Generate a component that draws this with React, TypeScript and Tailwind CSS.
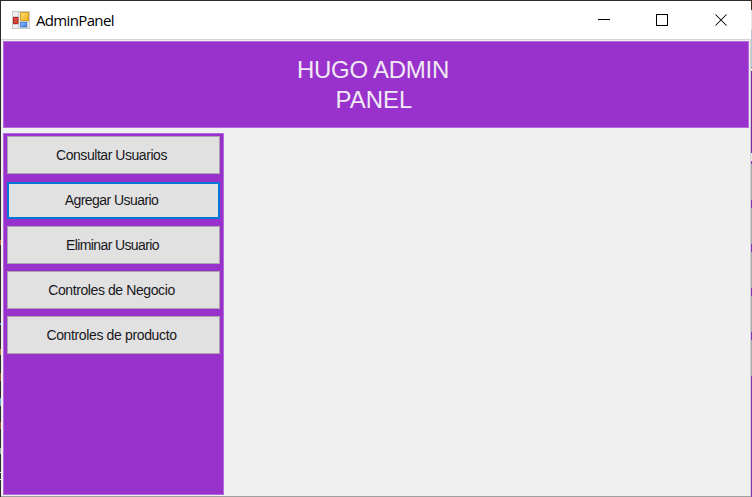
type MenuItem = { label: string; text: string; focused?: boolean };

const items: MenuItem[] = [
  { label: 'Consultar Usuarios', text: 'tracking-[-0.45px] pr-[4px]' },
  { label: 'Agregar Usuario', text: 'tracking-[-0.55px] pr-[4px]', focused: true },
  { label: 'Eliminar Usuario', text: 'tracking-[-0.62px] pr-[2px]' },
  { label: 'Controles de Negocio', text: 'tracking-[-0.4px] pr-[4px]' },
  { label: 'Controles de producto', text: 'tracking-[-0.36px] pr-[4px]' },
];

function AppIcon() {
  return (
    <svg className="size-[18px]" viewBox="0 0 18 18">
      <rect x=".5" y=".5" width="17" height="17" fill="#efefef" stroke="#c9c9c9" />
      <path d="M1 5.5H7M6.5 1V17M7 10.5H17M15.5 11V17M1 13.5H6" stroke="#cdcdcd" fill="none" />
      <defs>
        <linearGradient id="gold" x2="1" y2="1">
          <stop offset="0" stopColor="#ffe58a" />
          <stop offset="1" stopColor="#eda90c" />
        </linearGradient>
        <linearGradient id="blue" x2="1" y2="1">
          <stop offset="0" stopColor="#9cc5ff" />
          <stop offset="1" stopColor="#3474da" />
        </linearGradient>
      </defs>
      <rect x="8.5" y="1.5" width="8" height="8" fill="url(#gold)" stroke="#d99f1d" />
      <rect x="1.5" y="6.5" width="4.5" height="6" fill="#d2443d" stroke="#b52b27" />
      <rect x="8.5" y="11.5" width="6" height="4.5" fill="url(#blue)" stroke="#4b83d8" />
    </svg>
  );
}

function TitleBar() {
  return (
    <header className="flex h-[39px] shrink-0 items-center border-b border-[#d5d5d5] bg-white">
      <div className="flex w-[29px] justify-end">
        <AppIcon />
      </div>
      <h1 className="ml-[6px] pb-px font-['Open_Sans','Noto_Sans',sans-serif] text-[15px] leading-[20px] tracking-[-0.65px] text-black">
        AdminPanel
      </h1>
      <div className="ml-auto flex pr-[22px]">
        <svg width="132" height="14" viewBox="0 0 132 14" fill="none" stroke="#000" shapeRendering="crispEdges">
          <path d="M1 6.5H13" />
          <rect x="59.5" y="1.5" width="11" height="11" />
          <path d="M118.5 1.5L129.5 12.5M129.5 1.5L118.5 12.5" shapeRendering="auto" strokeWidth="1.05" />
        </svg>
      </div>
    </header>
  );
}

function MenuButton({ item }: { item: MenuItem }) {
  return (
    <button
      className={`flex w-[213px] items-center justify-center bg-[#e1e1e1] text-[14px] leading-[18px] text-[#18181c] ${
        item.focused ? 'mt-px h-[37px] border-2 border-[#0078d7] pb-px' : 'h-[38px] border border-[#aaa2b0]'
      }`}
    >
      <span className={`whitespace-nowrap ${item.text}`}>{item.label}</span>
    </button>
  );
}

/* Slivers of the windows behind, one pixel wide on either side. */
const leftEdge = [
  'mt-[240px] h-[5px] bg-[#b5683a]',
  'mt-[78px] h-[2px] bg-[#5aa0d8]',
  'mt-[24px] h-[6px] bg-[#b5803f]',
  'mt-[18px] h-[8px] bg-[#96563c]',
  'mt-[17px] h-[8px] bg-[#75a9c8]',
  'mt-[16px] h-[7px] bg-[#96563c]',
  'mt-[19px] h-[6px] bg-[#93a9a4]',
  'mt-[18px] h-px bg-[#dddddd]',
  'mt-[6px] h-px bg-[#dddddd]',
];

const rightEdge = [
  'h-[10px] bg-[#3b2a20]',
  'h-[20px] bg-[#e8e8e8]',
  'h-[37px] bg-[#bac7d3]',
  'h-px bg-[#777777]',
  'h-[3px] bg-[#e8e8e8]',
  'h-[82px] bg-[#7a28a8]',
  'h-[8px] bg-[#e8e8e8]',
  'h-[3px] bg-[#8a35b8]',
  'h-[36px] bg-[#a8a8a8]',
  'h-[8px] bg-[#8a35b8]',
  'h-[36px] bg-[#a8a8a8]',
  'h-[8px] bg-[#8a35b8]',
  'h-[36px] bg-[#a8a8a8]',
  'h-[8px] bg-[#8a35b8]',
  'h-[36px] bg-[#a8a8a8]',
  'h-[8px] bg-[#8a35b8]',
  'h-[36px] bg-[#a8a8a8]',
  'flex-1 bg-[#8a35b8]',
];

export default function App() {
  return (
    <div className="flex h-[497px] w-[752px] bg-[#30292b] font-['Liberation_Sans',Arial,sans-serif]">
      <div className="flex w-px flex-col">
        {leftEdge.map((style, i) => (
          <div key={i} className={style} />
        ))}
      </div>
      <div className="mt-px flex w-[750px] flex-col border-b border-[#a0a0a0] bg-[#f0f0f0]">
        <TitleBar />
        <main className="flex flex-1 flex-col border-r border-[#d2d2d2] pt-px pr-px pb-px pl-[2px]">
          <section className="flex h-[87px] shrink-0 justify-center border border-[#b56adb] bg-[#9932cc] pt-[12px] pr-[6px] text-center text-[24px] leading-[30px] tracking-[-0.25px] text-[#f0e9f4]">
            <h2 className="pt-px">
              HUGO ADMIN
              <br />
              <span className="pl-[2px] tracking-normal">PANEL</span>
            </h2>
          </section>
          <nav className="mt-[5px] flex w-[221px] flex-1 flex-col gap-[7px] border border-[#b56adb] bg-[#9932cc] pt-[2px] pl-[3px]">
            {items.map((item) => (
              <MenuButton key={item.label} item={item} />
            ))}
          </nav>
        </main>
      </div>
      <div className="flex w-px flex-col">
        {rightEdge.map((style, i) => (
          <div key={i} className={style} />
        ))}
      </div>
    </div>
  );
}
